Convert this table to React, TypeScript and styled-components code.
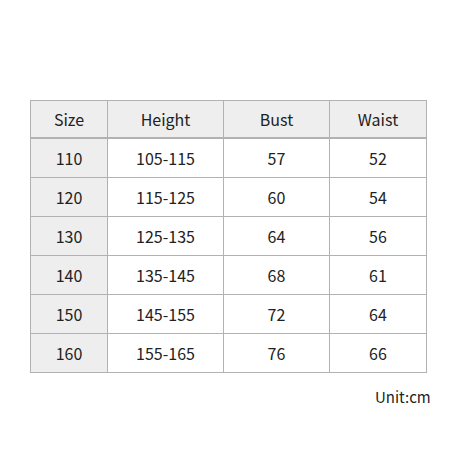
import React from "react";
import styled, { createGlobalStyle } from "styled-components";

const Global = createGlobalStyle`
  html, body { margin: 0; padding: 0; background: #ffffff; }
  body { font-family: "Noto Sans CJK JP", "Noto Sans", sans-serif; color: #222; }
`;

const Page = styled.div`
  width: 460px;
  height: 460px;
  box-sizing: border-box;
  padding: 100px 0 0 30px;
  display: flex;
  flex-direction: column;
  align-items: flex-start;
`;

const Grid = styled.div`
  display: grid;
  grid-template-columns: 76px 115px 105px 96px;
  grid-template-rows: 37px repeat(6, 38px);
  gap: 1px;
  border: 1px solid #b2b2b2;
  background: #b2b2b2;
`;

const Cell = styled.div<{ $shade?: boolean; $head?: boolean }>`
  display: flex;
  align-items: center;
  justify-content: center;
  box-sizing: border-box;
  font-size: 16px;
  line-height: 1;
  color: #222;
  background: ${(p) => (p.$shade ? "#eeeeee" : "#ffffff")};
  border-bottom: ${(p) => (p.$head ? "1px solid #b2b2b2" : "none")};
`;

const Unit = styled.div`
  align-self: flex-start;
  margin: 16px 0 0 345px;
  font-size: 15px;
  line-height: 1;
  color: #222;
`;

const headers = ["Size", "Height", "Bust", "Waist"];

const rows = [
  ["110", "105-115", "57", "52"],
  ["120", "115-125", "60", "54"],
  ["130", "125-135", "64", "56"],
  ["140", "135-145", "68", "61"],
  ["150", "145-155", "72", "64"],
  ["160", "155-165", "76", "66"],
];

export default function App() {
  return (
    <>
      <Global />
      <Page>
        <Grid>
          {headers.map((h) => (
            <Cell key={h} $head $shade>
              {h}
            </Cell>
          ))}
          {rows.map((r) =>
            r.map((v, i) => (
              <Cell key={r[0] + "-" + i} $shade={i === 0}>
                {v}
              </Cell>
            ))
          )}
        </Grid>
        <Unit>Unit:cm</Unit>
      </Page>
    </>
  );
}
